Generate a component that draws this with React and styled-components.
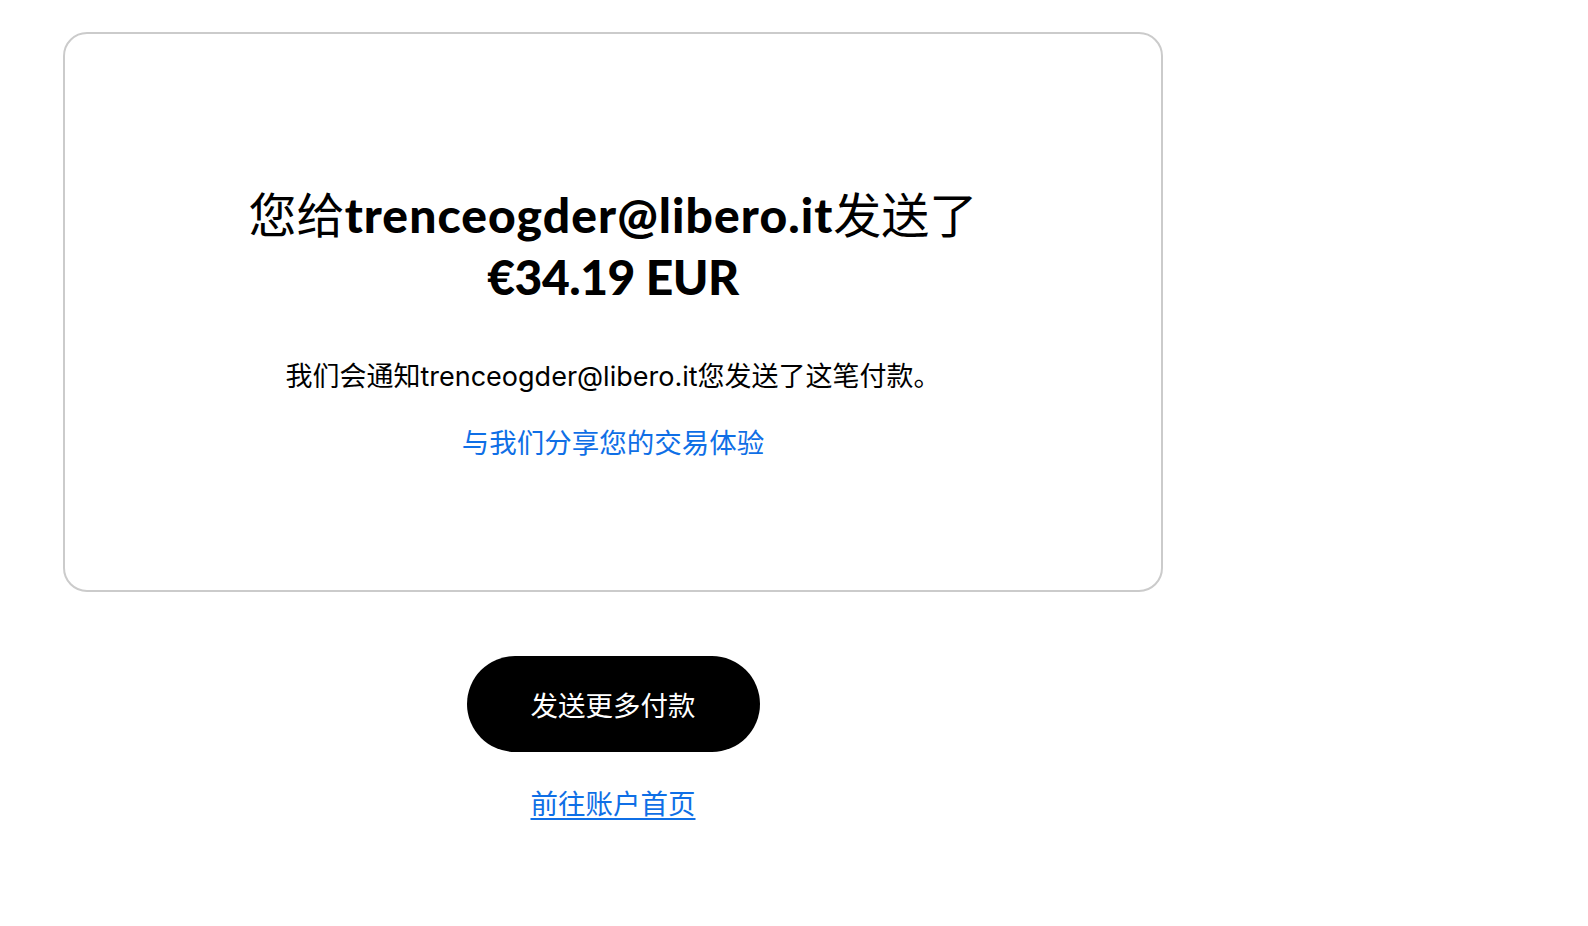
import React from "react";
import styled, { createGlobalStyle } from "styled-components";

const GlobalStyle = createGlobalStyle`
  html, body {
    margin: 0;
    padding: 0;
    background: #ffffff;
  }
  body {
    font-family: "Inter", "Noto Sans CJK SC", sans-serif;
    color: #000000;
  }
`;

const Page = styled.main`
  width: 1100px;
  padding: 32px 0 80px 63px;
  display: flex;
  flex-direction: column;
  align-items: center;
`;

const Card = styled.section`
  box-sizing: border-box;
  width: 100%;
  border: 2px solid #cbcbcb;
  border-radius: 24px;
  padding: 147px 40px 129px;
  display: flex;
  flex-direction: column;
  align-items: center;
  text-align: center;
`;

const Heading = styled.h1`
  margin: 0;
  font-family: "Noto Sans CJK SC", sans-serif;
  font-weight: 400;
  font-size: 48px;
  line-height: 62px;
  color: #000;
`;

const Emphasis = styled.strong`
  font-family: "Lato", "Noto Sans CJK SC", sans-serif;
  font-weight: 900;
  line-height: 1;
  letter-spacing: ${(p) => p.$tracking}px;
`;

const Notice = styled.p`
  margin: 52px 0 0;
  font-family: "Inter", "Noto Sans CJK SC", sans-serif;
  font-size: 27px;
  line-height: 40px;
  color: #000;
`;

const TextLink = styled.a`
  display: inline-block;
  margin-top: ${(p) => p.$gap}px;
  font-family: "Noto Sans CJK SC", sans-serif;
  font-size: 27.5px;
  line-height: 40px;
  color: #0f6fe6;
  text-decoration: ${(p) => (p.$underline ? "underline" : "none")};
  text-decoration-thickness: 2px;
  text-underline-offset: 4px;
  cursor: pointer;
`;

const PrimaryButton = styled.button`
  margin-top: 64px;
  height: 96px;
  padding: 0 64px;
  border: none;
  border-radius: 48px;
  background: #000;
  color: #fff;
  font-family: "Noto Sans CJK SC", sans-serif;
  font-size: 27.5px;
  cursor: pointer;
`;

export default function App() {
  return (
    <>
      <GlobalStyle />
      <Page>
        <Card>
          <Heading>
            您给<Emphasis $tracking={1.05}>trenceogder@libero.it</Emphasis>发送了
            <br />
            <Emphasis $tracking={-0.5}>€34.19 EUR</Emphasis>
          </Heading>
          <Notice>我们会通知trenceogder@libero.it您发送了这笔付款。</Notice>
          <TextLink $gap={24}>与我们分享您的交易体验</TextLink>
        </Card>
        <PrimaryButton>发送更多付款</PrimaryButton>
        <TextLink $gap={30} $underline>
          前往账户首页
        </TextLink>
      </Page>
    </>
  );
}
